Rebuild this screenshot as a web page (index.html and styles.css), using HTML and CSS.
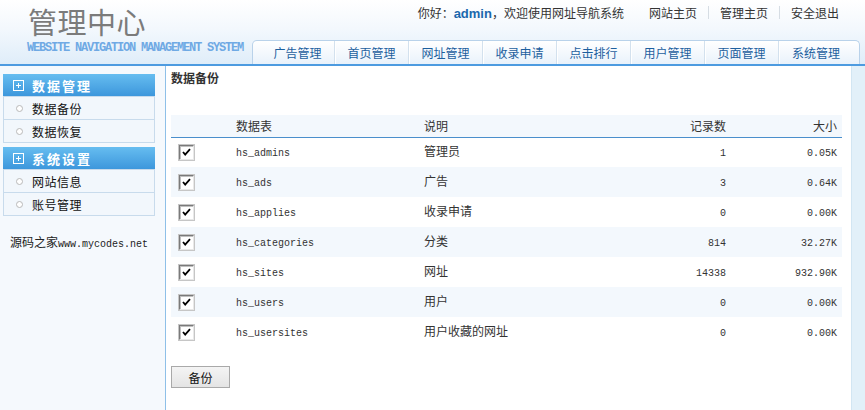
FILE: index.html
```html
<!DOCTYPE html>
<html lang="zh-CN">
<head>
<meta charset="utf-8">
<title>管理中心</title>
<link rel="stylesheet" href="styles.css">
</head>
<body>
<div class="header">
  <div class="logo">
    <div class="logo-cn">管理中心</div>
    <div class="logo-en">WEBSITE NAVIGATION MANAGEMENT SYSTEM</div>
  </div>
  <div class="head-right">
    <div class="toplinks">
      <span class="greet">你好：<b>admin</b>，欢迎使用网址导航系统</span>
      <a class="tl">网站主页</a><i class="sep"></i><a class="tl">管理主页</a><i class="sep"></i><a class="tl">安全退出</a>
    </div>
    <ul class="nav">
      <li>广告管理</li><li>首页管理</li><li>网址管理</li><li>收录申请</li><li>点击排行</li><li>用户管理</li><li>页面管理</li><li>系统管理</li>
    </ul>
  </div>
</div>
<div class="main">
  <aside class="side">
    <div class="group">
      <div class="ghead"><svg class="plus" width="11" height="11" viewBox="0 0 11 11"><rect x="0.5" y="0.5" width="10" height="10" fill="none" stroke="#fff"/><path d="M3 5.5h5M5.5 3v5" stroke="#fff" stroke-width="1"/></svg>数据管理</div>
      <div class="item"><i class="dot"></i>数据备份</div>
      <div class="item"><i class="dot"></i>数据恢复</div>
    </div>
    <div class="group">
      <div class="ghead"><svg class="plus" width="11" height="11" viewBox="0 0 11 11"><rect x="0.5" y="0.5" width="10" height="10" fill="none" stroke="#fff"/><path d="M3 5.5h5M5.5 3v5" stroke="#fff" stroke-width="1"/></svg>系统设置</div>
      <div class="item"><i class="dot"></i>网站信息</div>
      <div class="item"><i class="dot"></i>账号管理</div>
    </div>
    <div class="credit">源码之家<span class="mono">www.mycodes.net</span></div>
  </aside>
  <section class="content">
    <h1 class="title">数据备份</h1>
    <table class="tbl">
      <colgroup><col class="c1"><col class="c2"><col class="c3"><col class="c4"><col class="c5"></colgroup>
      <thead>
        <tr><th></th><th>数据表</th><th>说明</th><th class="r">记录数</th><th class="r">大小</th></tr>
      </thead>
      <tbody>
        <tr><td><span class="cb"><svg width="9" height="9" viewBox="0 0 9 9"><path d="M1 4l2.2 2.6L8 1.2" fill="none" stroke="#000" stroke-width="1.8"/></svg></span></td><td class="m">hs_admins</td><td class="zh">管理员</td><td class="r m">1</td><td class="r m">0.05K</td></tr>
        <tr><td><span class="cb"><svg width="9" height="9" viewBox="0 0 9 9"><path d="M1 4l2.2 2.6L8 1.2" fill="none" stroke="#000" stroke-width="1.8"/></svg></span></td><td class="m">hs_ads</td><td class="zh">广告</td><td class="r m">3</td><td class="r m">0.64K</td></tr>
        <tr><td><span class="cb"><svg width="9" height="9" viewBox="0 0 9 9"><path d="M1 4l2.2 2.6L8 1.2" fill="none" stroke="#000" stroke-width="1.8"/></svg></span></td><td class="m">hs_applies</td><td class="zh">收录申请</td><td class="r m">0</td><td class="r m">0.00K</td></tr>
        <tr><td><span class="cb"><svg width="9" height="9" viewBox="0 0 9 9"><path d="M1 4l2.2 2.6L8 1.2" fill="none" stroke="#000" stroke-width="1.8"/></svg></span></td><td class="m">hs_categories</td><td class="zh">分类</td><td class="r m">814</td><td class="r m">32.27K</td></tr>
        <tr><td><span class="cb"><svg width="9" height="9" viewBox="0 0 9 9"><path d="M1 4l2.2 2.6L8 1.2" fill="none" stroke="#000" stroke-width="1.8"/></svg></span></td><td class="m">hs_sites</td><td class="zh">网址</td><td class="r m">14338</td><td class="r m">932.90K</td></tr>
        <tr><td><span class="cb"><svg width="9" height="9" viewBox="0 0 9 9"><path d="M1 4l2.2 2.6L8 1.2" fill="none" stroke="#000" stroke-width="1.8"/></svg></span></td><td class="m">hs_users</td><td class="zh">用户</td><td class="r m">0</td><td class="r m">0.00K</td></tr>
        <tr><td><span class="cb"><svg width="9" height="9" viewBox="0 0 9 9"><path d="M1 4l2.2 2.6L8 1.2" fill="none" stroke="#000" stroke-width="1.8"/></svg></span></td><td class="m">hs_usersites</td><td class="zh">用户收藏的网址</td><td class="r m">0</td><td class="r m">0.00K</td></tr>
      </tbody>
    </table>
    <button class="btn">备份</button>
  </section>
  <div class="rstrip"></div>
</div>
</body>
</html>
```
FILE: styles.css
```css
* { box-sizing: border-box; }
html, body { margin: 0; padding: 0; }
body {
  width: 865px;
  height: 410px;
  overflow: hidden;
  font-family: "Noto Sans CJK SC", "Liberation Sans", sans-serif;
  font-size: 12px;
  color: #333;
  background: #fff;
}
.mono, .m { font-family: "Liberation Mono", "DejaVu Sans Mono", monospace; font-size: 10px; }

/* header */
.header {
  display: flex;
  height: 66px;
  background: linear-gradient(#ffffff 0%, #f3f8fd 45%, #dfedf9 100%);
  border-bottom: 2px solid #4d9be0;
}
.logo { width: 252px; padding-left: 27px; padding-top: 6px; }
.logo-cn {
  font-size: 29px;
  line-height: 30px;
  color: #7b7b7b;
  padding-left: 1px;
  letter-spacing: 0.5px;
}
.logo-en {
  margin-top: 6px;
  font-family: "Liberation Mono", "DejaVu Sans Mono", monospace;
  font-weight: bold;
  font-size: 12px;
  line-height: 12px;
  letter-spacing: -1.2px;
  color: #6fa9e4;
  white-space: nowrap;
}
.head-right { flex: 1; display: flex; flex-direction: column; justify-content: space-between; padding-right: 5px; }
.toplinks {
  display: flex;
  align-items: center;
  justify-content: flex-end;
  height: 24px;
  padding-right: 21px;
  white-space: nowrap;
}
.greet { margin-right: 25px; color: #333; }
.greet b { color: #1b68ad; font-family: "Liberation Sans", sans-serif; font-size: 13px; }
.tl { color: #333; text-decoration: none; }
.sep { display: inline-block; width: 1px; height: 13px; background: #d6dde4; margin: 0 11px; }
.nav {
  list-style: none;
  margin: 0;
  display: flex;
  height: 24px;
  padding: 0 0 0 8px;
  border: 1px solid #b9d2ea;
  border-bottom: none;
  border-radius: 5px 5px 0 0;
  background: linear-gradient(#ffffff, #e9f2fb);
}
.nav li {
  width: 74px;
  text-align: center;
  line-height: 23px;
  color: #1d5f9e;
  font-size: 12px;
  border-right: 1px solid #d3e1ee;
  box-shadow: 1px 0 0 #fff;
}
.nav li:last-child { border-right: none; box-shadow: none; }

/* main */
.main { display: flex; height: 344px; }
.side {
  width: 166px;
  flex: none;
  background: #f5f9fd;
  border-right: 1px solid #8ec0e8;
  padding: 8px 0 0 3px;
}
.group { width: 152px; margin-bottom: 4px; border: 1px solid #c8dbec; border-top: none; }
.ghead {
  height: 22px;
  margin: 0 -1px;
  display: flex;
  align-items: center;
  padding-left: 10px;
  background: linear-gradient(#66bdf0, #3d97dc);
  color: #fff;
  font-weight: bold;
  font-size: 13px;
  letter-spacing: 2px;
}
.plus { margin-right: 8px; flex: none; }
.item {
  height: 23px;
  display: flex;
  align-items: center;
  padding-left: 12px;
  background: #f2f7fc;
  border-top: 1px solid #c8dbec;
  color: #111;
  font-size: 12px;
  letter-spacing: 0.5px;
}
.item:first-of-type { border-top: none; }
.dot {
  width: 7px; height: 7px;
  border: 1px solid #b9b9b9;
  border-radius: 50%;
  background: #fff;
  margin-right: 9px;
}
.credit { margin-top: 19px; padding-left: 7px; color: #222; line-height: 14px; white-space: nowrap; }
.credit .mono { font-size: 10px; color: #222; }

.content { flex: 1; padding-left: 5px; }
.title { margin: 0; font-size: 12px; font-weight: bold; line-height: 24px; color: #333; }
.tbl { margin-top: 25px; width: 671px; border-collapse: collapse; table-layout: fixed; }
.c1 { width: 60px; } .c2 { width: 188px; } .c3 { width: 200px; } .c4 { width: 112px; } .c5 { width: 111px; }
.tbl th {
  height: 22px;
  padding: 0 5px;
  font-weight: normal;
  text-align: left;
  background: #f3f8fd;
  border-bottom: 1px solid #4a8fcc;
  color: #333;
}
.tbl td { height: 30px; padding: 0 5px; color: #333; line-height: 14px; }
.tbl tbody tr:nth-child(even) td { background: #f3f8fd; }
.tbl .r { text-align: right; }
.tbl td.m { font-size: 10px; padding-top: 4px; }
.tbl td.zh { padding-bottom: 2px; }
.cb {
  display: inline-flex;
  align-items: center;
  justify-content: center;
  width: 15px; height: 15px;
  margin-left: 3px;
  vertical-align: middle;
  background: #fff;
  border: 1px solid;
  border-color: #7a7a7a #e8e8e8 #e8e8e8 #7a7a7a;
  box-shadow: 0 0 0 1px #c6c6c6, inset 1px 1px 0 #c0c0c0;
}
.btn {
  margin-top: 19px;
  width: 59px;
  height: 22px;
  padding: 0;
  font-family: "Noto Sans CJK SC", sans-serif;
  font-size: 12px;
  color: #111;
  background: linear-gradient(#f4f4f4, #e4e4e4);
  border: 1px solid #a9a9a9;
}
.rstrip { width: 14px; flex: none; background: #e2f0f9; border-left: 1px solid #d2e6f3; }
```
